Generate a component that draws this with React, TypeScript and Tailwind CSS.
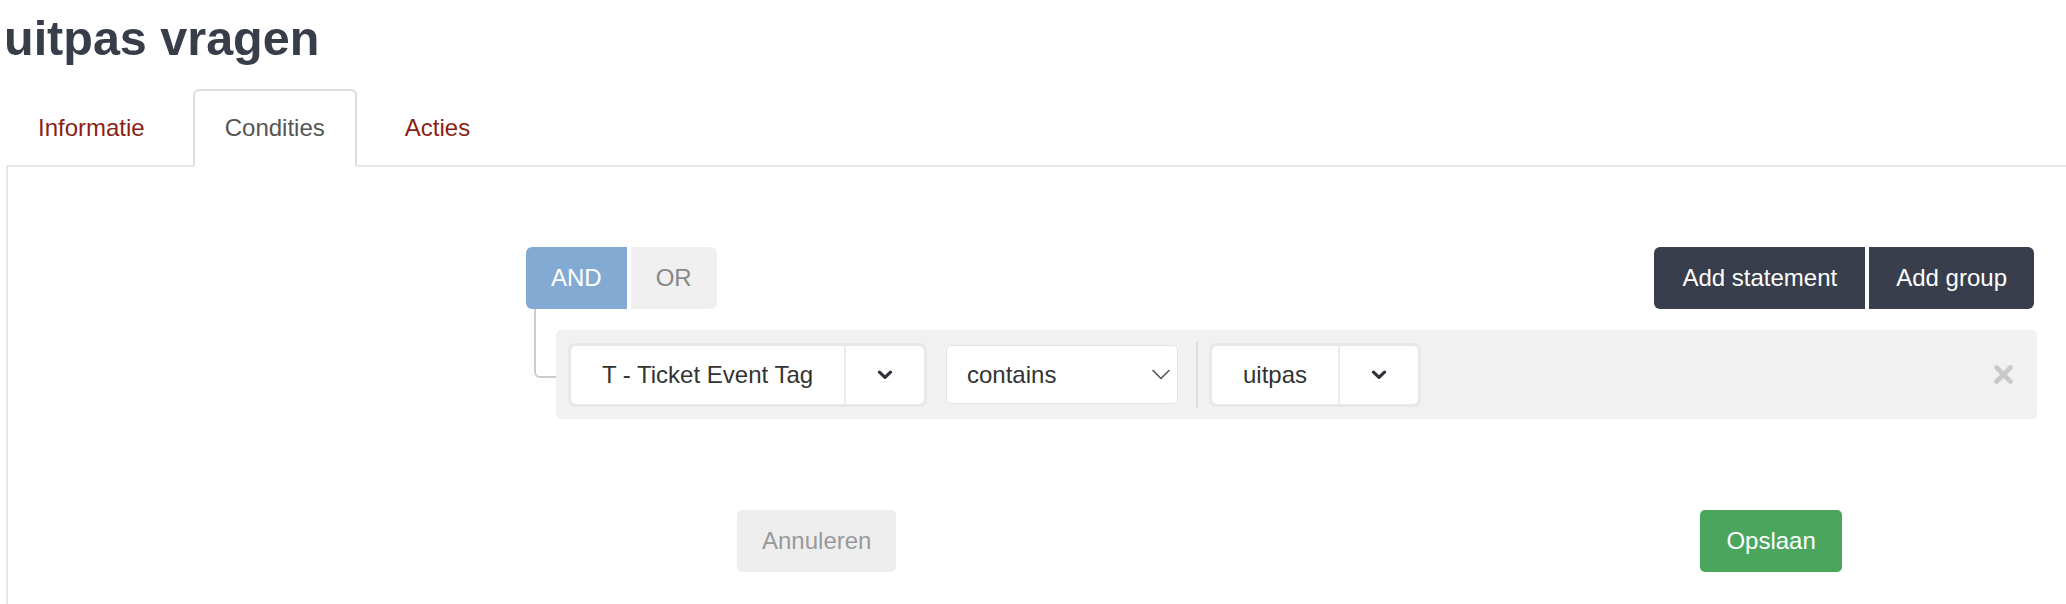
import React from "react";

function BoldChevron() {
  return (
    <svg width="16" height="10" viewBox="0 0 16 10" fill="none">
      <path d="M2.5 2.2 L8 7.4 L13.5 2.2" stroke="#2f333b" strokeWidth="3.2" strokeLinecap="round" strokeLinejoin="round" />
    </svg>
  );
}

function ThinChevron() {
  return (
    <svg width="18" height="11" viewBox="0 0 18 11" fill="none">
      <path d="M1 1.5 L9 9.5 L17 1.5" stroke="#555555" strokeWidth="1.6" strokeLinecap="round" strokeLinejoin="round" />
    </svg>
  );
}

function TimesIcon() {
  return (
    <svg width="21" height="21" viewBox="0 0 21 21" fill="none">
      <path d="M3.5 3.5 L17.5 17.5 M17.5 3.5 L3.5 17.5" stroke="#c9c9c9" strokeWidth="4.6" strokeLinecap="round" />
    </svg>
  );
}

function SelectGroup({ label, leftWidth }: { label: string; leftWidth: string }) {
  return (
    <div className="p-[3px] rounded-[7px] bg-[#e8e8e8]">
      <div className="flex h-[58px] bg-white rounded-[5px]">
        <div className={`${leftWidth} flex items-center justify-center text-[24px] text-[#333333] whitespace-nowrap`}>
          {label}
        </div>
        <div className="w-[2px] bg-[#ececec]" />
        <div className="w-[78px] flex items-center justify-center">
          <BoldChevron />
        </div>
      </div>
    </div>
  );
}

export default function App() {
  return (
    <div className="w-[2066px] h-[604px] bg-white overflow-hidden font-['Liberation_Sans',Arial,sans-serif]">
      <h1 className="pl-[4px] pt-[11px] text-[48.5px] leading-[54px] font-bold text-[#383d4a]">uitpas vragen</h1>

      <div className="relative z-10 mt-[24px] ml-[6px] flex gap-[16px]">
        <div className="border-2 border-transparent px-[30px] py-[20px] text-[24px] leading-[34px] text-[#8a1f17]">
          Informatie
        </div>
        <div className="border-2 border-[#dddddd] border-b-white bg-white rounded-t-[6px] px-[30px] py-[20px] text-[24px] leading-[34px] text-[#555555]">
          Condities
        </div>
        <div className="border-2 border-transparent px-[30px] py-[20px] text-[24px] leading-[34px] text-[#8a1f17]">
          Acties
        </div>
      </div>

      <div className="-mt-[2px] ml-[6px] border-t-2 border-l-2 border-[#e6e6e6] pt-[80px] h-[460px]">
        <div className="ml-[518px] w-[1511px]">
          <div className="flex justify-between h-[62px]">
            <div className="flex gap-[4px]">
              <div className="flex items-center px-[25px] bg-[#83aad3] rounded-l-[6px] text-[24px] text-white">AND</div>
              <div className="flex items-center px-[25px] bg-[#f0f0f0] rounded-r-[6px] text-[24px] text-[#888888]">OR</div>
            </div>
            <div className="flex gap-[4px] mr-[3px]">
              <div className="flex items-center px-[28px] bg-[#383e4b] rounded-l-[6px] text-[24px] text-white">Add statement</div>
              <div className="flex items-center px-[27px] bg-[#383e4b] rounded-r-[6px] text-[24px] text-white">Add group</div>
            </div>
          </div>

          <div className="relative mt-[21px] pl-[30px]">
            <div className="absolute left-[8px] -top-[21px] w-[22px] h-[69px] border-l-2 border-b-2 border-[#cccccc] rounded-bl-[6px]" />
            <div className="h-[89px] bg-[#f1f1f1] rounded-[5px] flex items-center pl-[12px] pr-[23px]">
              <SelectGroup label="T - Ticket Event Tag" leftWidth="w-[273px]" />
              <div className="ml-[19px] w-[232px] h-[59px] bg-white rounded-[5px] border border-[#e4e4e4] flex items-center justify-between pl-[20px] pr-[7px] text-[24px] text-[#333333]">
                <span>contains</span>
                <ThinChevron />
              </div>
              <div className="ml-[18px] w-[2px] h-[66px] bg-[#dcdcdc]" />
              <div className="ml-[11px]">
                <SelectGroup label="uitpas" leftWidth="w-[126px]" />
              </div>
              <div className="flex-1" />
              <TimesIcon />
            </div>
          </div>
        </div>

        <div className="mt-[91px] flex">
          <div className="ml-[729px] h-[62px] flex items-center px-[25px] bg-[#eeeeee] rounded-[5px] text-[24px] text-[#999999]">
            Annuleren
          </div>
          <div className="ml-[804px] h-[62px] flex items-center px-[26px] bg-[#4aa55d] rounded-[5px] text-[24px] text-white">
            Opslaan
          </div>
        </div>
      </div>
    </div>
  );
}
